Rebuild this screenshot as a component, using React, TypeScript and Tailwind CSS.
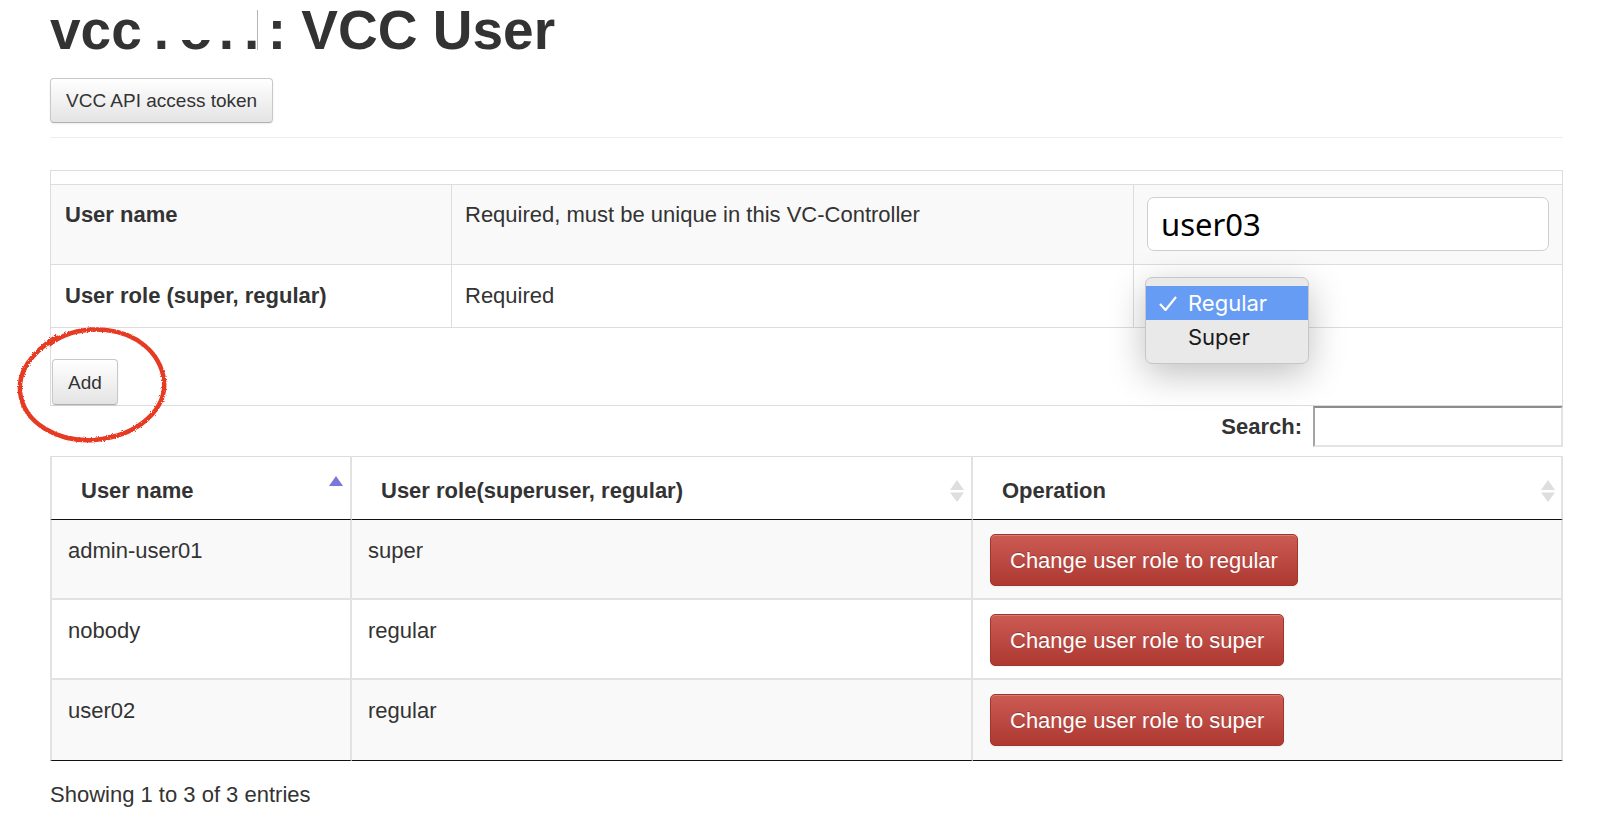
const users = [
  { name: 'admin-user01', role: 'super', action: 'Change user role to regular' },
  { name: 'nobody', role: 'regular', action: 'Change user role to super' },
  { name: 'user02', role: 'regular', action: 'Change user role to super' },
];

const grayBtn =
  'rounded-[4px] border border-[#c8c8c8] border-b-[#b0b0b0] bg-linear-to-b from-white to-[#e4e4e4] text-[19px] text-[#333] shadow-[inset_0_1px_0_rgba(255,255,255,0.3),0_1px_2px_rgba(0,0,0,0.08)]';

function SortIcon({ active }: { active?: boolean }) {
  return (
    <svg width="14" height="22" viewBox="0 0 14 22" className="shrink-0">
      <polygon points="7,0 14,10 0,10" fill={active ? '#7878dc' : '#dedede'} />
      {!active && <polygon points="0,12.5 14,12.5 7,22" fill="#dedede" />}
    </svg>
  );
}

export default function App() {
  return (
    <div className="relative min-h-[818px] bg-white font-['Liberation_Sans',Arial,sans-serif] text-[22px] leading-[31px] text-[#333]">
      <div className="ml-[50px] w-[1513px] pt-[3px]">
        <h1 className="whitespace-nowrap text-[55px] font-bold leading-[55px]">
          vcc
          <span className="relative inline-block w-[126px]">
            <span className="ml-[12px]">.</span>
            <span className="ml-[10px]">o</span>
            <span className="ml-[6px]">.</span>
            <span className="ml-[10px]">.</span>
            <span className="absolute left-0 right-0 top-[-4px] h-[41px] bg-white" />
            <span className="absolute left-[115px] top-[7px] h-[40px] w-px bg-[#b5b5b5]" />
          </span>
          : VCC User
        </h1>

        <button className={`${grayBtn} mt-[20px] h-[45px] px-[15px]`}>VCC API access token</button>

        <div className="mt-[14px] border-t border-[#eee]" />

        <div className="mt-[32px] border border-[#ddd]">
          <div className="pt-[13px]">
            <table className="w-full table-fixed border-separate border-spacing-0 border-t border-[#ddd]">
              <tbody>
                <tr className="bg-[#f9f9f9]">
                  <td className="w-[401px] border-b border-r border-[#ddd] pl-[14px] pt-[14px] align-top font-bold">
                    User name
                  </td>
                  <td className="w-[682px] border-b border-r border-[#ddd] pl-[13px] pt-[14px] align-top">
                    Required, must be unique in this VC-Controller
                  </td>
                  <td className="border-b border-[#ddd] px-[13px] pb-[13px] pt-[12px] align-top">
                    <input
                      readOnly
                      value="user03"
                      className="block h-[54px] w-full rounded-[7px] border border-[#cfcfcf] bg-white pl-[13px] font-['Noto_Sans',sans-serif] text-[31px] text-black outline-none"
                    />
                  </td>
                </tr>
                <tr>
                  <td className="border-b border-r border-[#ddd] pl-[14px] pt-[15px] align-top font-bold">
                    User role (super, regular)
                  </td>
                  <td className="border-b border-r border-[#ddd] pl-[13px] pt-[15px] align-top">Required</td>
                  <td className="border-b border-[#ddd] px-[13px] pb-[14px] pt-[15px] align-top">
                    <div className="h-[33px]" />
                  </td>
                </tr>
              </tbody>
            </table>
          </div>
          <button className={`${grayBtn} ml-[1px] mt-[31px] block h-[46px] px-[15px]`}>Add</button>
        </div>

        <div className="flex h-[41px] items-center justify-end">
          <span className="mr-[11px] font-bold">Search:</span>
          <div className="h-[41px] w-[250px] border-2 border-b-[#e4e4e4] border-l-[#a3a3a3] border-r-[#e4e4e4] border-t-[#8c8c8c] bg-white" />
        </div>

        <table className="mt-[9px] w-full table-fixed border-separate border-spacing-0">
          <thead>
            <tr>
              <th className="w-[302px] border-b border-l-2 border-r-2 border-t border-b-[#111] border-l-[#e2e2e2] border-r-[#e2e2e2] border-t-[#ddd] pb-[13px] pl-[29px] pr-[7px] pt-[18px] text-left align-top font-bold">
                <div className="flex items-center justify-between">
                  <span>User name</span>
                  <div className="-mt-[7px]">
                    <SortIcon active />
                  </div>
                </div>
              </th>
              <th className="w-[621px] border-b border-r-2 border-t border-b-[#111] border-r-[#e2e2e2] border-t-[#ddd] pb-[13px] pl-[29px] pr-[7px] pt-[18px] text-left align-top font-bold">
                <div className="flex items-center justify-between">
                  <span>User role(superuser, regular)</span>
                  <SortIcon />
                </div>
              </th>
              <th className="border-b border-r-2 border-t border-b-[#111] border-r-[#e2e2e2] border-t-[#ddd] pb-[13px] pl-[29px] pr-[6px] pt-[18px] text-left align-top font-bold">
                <div className="flex items-center justify-between">
                  <span>Operation</span>
                  <SortIcon />
                </div>
              </th>
            </tr>
          </thead>
          <tbody>
            {users.map((u, i) => {
              const last = i === users.length - 1;
              const rowBorder = last ? 'border-b border-b-[#111]' : 'border-b-2 border-b-[#e2e2e2]';
              return (
                <tr key={u.name} className={i % 2 === 0 ? 'bg-[#f9f9f9]' : 'bg-white'}>
                  <td className={`${rowBorder} border-l-2 border-r-2 border-l-[#e2e2e2] border-r-[#e2e2e2] pl-[16px] pt-[15px] align-top`}>
                    {u.name}
                  </td>
                  <td className={`${rowBorder} border-r-2 border-r-[#e2e2e2] pl-[16px] pt-[15px] align-top`}>{u.role}</td>
                  <td className={`${rowBorder} border-r-2 border-r-[#e2e2e2] pl-[17px] pt-[14px] align-top ${last ? 'pb-[14px]' : 'pb-[12px]'}`}>
                    <button className="h-[52px] rounded-[5px] border border-[#a2362d] bg-linear-to-b from-[#cc5b53] to-[#ad3931] px-[19px] text-[22px] text-white shadow-[inset_0_1px_0_rgba(255,255,255,0.2),0_1px_2px_rgba(0,0,0,0.05)] [text-shadow:0_-1px_0_rgba(0,0,0,0.25)]">
                      {u.action}
                    </button>
                  </td>
                </tr>
              );
            })}
          </tbody>
        </table>

        <p className="mt-[18px]">Showing 1 to 3 of 3 entries</p>
      </div>

      {/* native select popup */}
      <div className="absolute left-[1145px] top-[277px] w-[164px] rounded-[7px] border border-[#c6c6c6] bg-[#e9e9e9] py-[8px] font-['Inter',sans-serif] text-[22px] shadow-[0_10px_36px_rgba(0,0,0,0.25)]">
        <div className="flex h-[34px] items-center bg-[#679cf4] text-white">
          <svg width="18" height="15" viewBox="0 0 18 15" className="ml-[13px] mr-[11px]">
            <polyline points="1,8 6.5,14 17,1" fill="none" stroke="white" strokeWidth="2.2" />
          </svg>
          <span>Regular</span>
        </div>
        <div className="flex h-[35px] items-center pl-[42px] text-[#1a1a1a]">Super</div>
      </div>

      {/* red annotation */}
      <svg className="pointer-events-none absolute left-[14px] top-[324px]" width="160" height="124" viewBox="0 0 160 124">
        <defs>
          <filter id="rough">
            <feTurbulence type="fractalNoise" baseFrequency="0.8" numOctaves="2" />
            <feDisplacementMap in="SourceGraphic" scale="3" />
          </filter>
        </defs>
        <path
          d="M36,20 C52,8 72,4 92,6 C122,9 146,28 150,56 C153,84 126,112 80,116 C44,118 10,100 6,68 C4,48 16,30 42,13"
          fill="none"
          stroke="#e63a22"
          strokeWidth="4.5"
          strokeLinecap="round"
          filter="url(#rough)"
        />
      </svg>
    </div>
  );
}
